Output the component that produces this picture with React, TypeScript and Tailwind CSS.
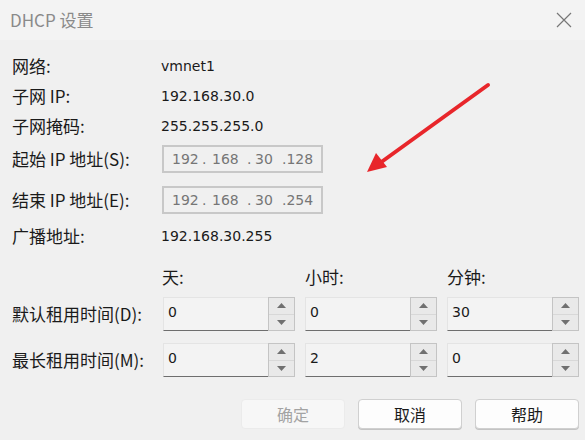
import React from "react";

const cjk = "font-['Noto_Sans_CJK_SC','Noto_Sans',sans-serif]";
const val = "font-['DejaVu_Sans','Noto_Sans_CJK_SC',sans-serif]";

const InfoRow = ({ label, value, h = "h-[30px]" }: { label: React.ReactNode; value: string; h?: string }) => (
  <div className={`flex items-center ${h}`}>
    <div className={`w-[149px] text-[17px] text-[#1a1a1a] ${cjk}`}>{label}</div>
    <div className={`text-[14px] text-[#1a1a1a] ${val}`}>{value}</div>
  </div>
);

const IpBox = ({ last }: { last: string }) => (
  <div className={`flex h-[28px] w-[161px] items-center border-2 border-[#c8c8c8] bg-[#f0f0f0] pl-[8px] text-[14px] text-[#767676] ${val}`}>
    <span className="w-[30px]">192</span>
    <span className="w-[10px]">.</span>
    <span className="w-[35px]">168</span>
    <span className="w-[8px]">.</span>
    <span className="w-[27px]">30</span>
    <span>.{last}</span>
  </div>
);

const Spin = ({ value }: { value: string }) => (
  <div className="flex h-[34px] w-[132px]">
    <div className={`flex flex-1 items-start border-b border-b-[#6e6e6e] border-t border-t-[#e4e4e4] border-l border-l-[#e4e4e4] bg-[#f3f3f3] pl-[4px] pt-[4px] text-[14px] text-[#1a1a1a] ${val}`}>
      {value}
    </div>
    <div className="flex w-[27px] flex-col border border-[#c4c4c4] bg-[#e9e9e9]">
      <div className="flex flex-1 items-center justify-center border-b border-[#d8d8d8]">
        <svg width="9" height="5" viewBox="0 0 9 5"><path d="M0 5 L4.5 0 L9 5 Z" fill="#707070" /></svg>
      </div>
      <div className="flex flex-1 items-center justify-center">
        <svg width="9" height="5" viewBox="0 0 9 5"><path d="M0 0 L9 0 L4.5 5 Z" fill="#707070" /></svg>
      </div>
    </div>
  </div>
);

const SpinRow = ({ label, values }: { label: React.ReactNode; values: string[] }) => (
  <div className="flex h-[34px] items-center">
    <div className={`w-[151px] text-[17px] text-[#1a1a1a] ${cjk}`}>{label}</div>
    <div className="flex gap-[10px]">
      {values.map((v, i) => (
        <Spin key={i} value={v} />
      ))}
    </div>
  </div>
);

const Btn = ({ children, disabled }: { children: React.ReactNode; disabled?: boolean }) => (
  <button
    className={`h-[30px] w-[104px] rounded-[4px] border text-[16px] ${cjk} ${
      disabled ? "border-[#ebebeb] bg-[#f7f7f7] text-[#a3a3a3]" : "border-[#d0d0d0] bg-[#fdfdfd] text-[#1a1a1a] shadow-[0_1px_0_#c4c4c4]"
    }`}>
    {children}
  </button>
);

export default function App() {
  return (
    <div className="relative h-[440px] w-[585px] overflow-hidden bg-[#f0f0f0]">
      <div className="flex h-[40px] items-center justify-between bg-[#f3f3f3] pl-[10px] pr-[10px]">
        <span className={`text-[17px] text-[#8a8a8a] ${cjk}`}>DHCP 设置</span>
        <svg width="16" height="16" viewBox="0 0 16 16" className="mr-[3px]">
          <path d="M1 1 L15 15 M15 1 L1 15" stroke="#777" strokeWidth="1.2" />
        </svg>
      </div>

      <div className="flex flex-col pl-[12px] pt-[11px]">
        <InfoRow label="网络:" value="vmnet1" />
        <InfoRow label="子网 IP:" value="192.168.30.0" />
        <InfoRow label="子网掩码:" value="255.255.255.0" />

        <div className="mt-[4px] flex h-[28px] items-center">
          <div className={`w-[150px] text-[17px] text-[#1a1a1a] ${cjk}`}>起始 IP 地址(S):</div>
          <IpBox last="128" />
        </div>
        <div className="mt-[13px] flex h-[28px] items-center">
          <div className={`w-[150px] text-[17px] text-[#1a1a1a] ${cjk}`}>结束 IP 地址(E):</div>
          <IpBox last="254" />
        </div>
        <div className="mt-[7px]">
          <InfoRow label="广播地址:" value="192.168.30.255" />
        </div>

        <div className={`mt-[14px] flex h-[24px] items-center pl-[150px] text-[17px] text-[#1a1a1a] ${cjk}`}>
          <span className="w-[143px]">天:</span>
          <span className="w-[142px]">小时:</span>
          <span>分钟:</span>
        </div>

        <div className="mt-[8px]">
          <SpinRow label="默认租用时间(D):" values={["0", "0", "30"]} />
        </div>
        <div className="mt-[12px]">
          <SpinRow label="最长租用时间(M):" values={["0", "2", "0"]} />
        </div>

        <div className="mt-[22px] flex justify-end gap-[13px] pr-[6px]">
          <Btn disabled>确定</Btn>
          <Btn>取消</Btn>
          <Btn>帮助</Btn>
        </div>
      </div>

      <svg className="pointer-events-none absolute left-0 top-0" width="585" height="440">
        <line x1="488" y1="85" x2="380" y2="163" stroke="#e8262b" strokeWidth="4" strokeLinecap="round" />
        <path d="M367 172 L376 153 L387 167 Z" fill="#e8262b" />
      </svg>
    </div>
  );
}
